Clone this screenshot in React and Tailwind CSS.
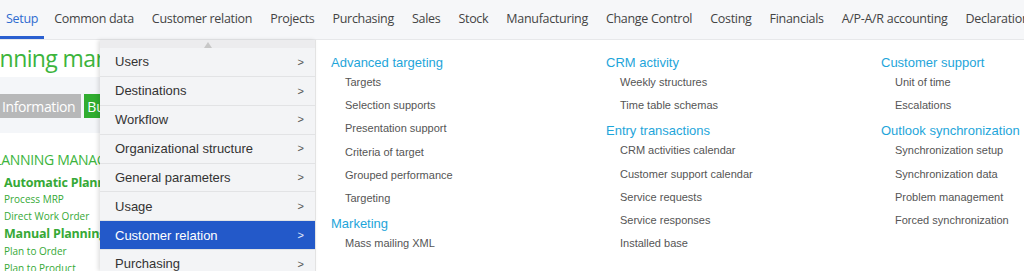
import React from "react";

const navItems = [
  "Setup",
  "Common data",
  "Customer relation",
  "Projects",
  "Purchasing",
  "Sales",
  "Stock",
  "Manufacturing",
  "Change Control",
  "Costing",
  "Financials",
  "A/P-A/R accounting",
  "Declarations",
];

const menuItems = [
  "Users",
  "Destinations",
  "Workflow",
  "Organizational structure",
  "General parameters",
  "Usage",
  "Customer relation",
  "Purchasing",
];

// columns of the sub menu, each holding groups
const columns = [
  [
    {
      title: "Advanced targeting",
      items: [
        "Targets",
        "Selection supports",
        "Presentation support",
        "Criteria of target",
        "Grouped performance",
        "Targeting",
      ],
    },
    { title: "Marketing", items: ["Mass mailing XML"] },
  ],
  [
    { title: "CRM activity", items: ["Weekly structures", "Time table schemas"] },
    {
      title: "Entry transactions",
      items: [
        "CRM activities calendar",
        "Customer support calendar",
        "Service requests",
        "Service responses",
        "Installed base",
      ],
    },
  ],
  [
    { title: "Customer support", items: ["Unit of time", "Escalations"] },
    {
      title: "Outlook synchronization",
      items: [
        "Synchronization setup",
        "Synchronization data",
        "Problem management",
        "Forced synchronization",
      ],
    },
  ],
];

const uiFont = "font-['Open_Sans','Noto_Sans',sans-serif]";
const arial = "font-['Liberation_Sans',Arial,sans-serif]";

const App = () => {
  return (
    <div className="w-[1024px] h-[271px] overflow-hidden bg-white">
      {/* top navigation */}
      <nav
        className={`flex h-[40px] bg-[#f6f7f9] border-b border-[#e7e8ea] whitespace-nowrap overflow-hidden ${uiFont} text-[12.5px] tracking-[-0.3px]`}
      >
        {navItems.map((item, i) => (
          <div
            key={item}
            className={
              i === 0
                ? "px-[6px] mr-[1px] flex items-center text-[#2f6bd0] border-b-[3px] border-[#2a5fd0] pt-[3px]"
                : "px-[9px] flex items-center text-[#444]"
            }
          >
            {item}
          </div>
        ))}
      </nav>

      <div className="flex h-[231px]">
        {/* page behind the menu */}
        <div className={`w-[100px] shrink-0 overflow-hidden whitespace-nowrap ${uiFont}`}>
          <div className="h-[37px] flex items-center overflow-hidden">
            <h1 className="ml-[-31px] text-[23px] text-[#3cb43c] tracking-[-0.6px]">
              Planning management
            </h1>
          </div>
          <div className="h-[56px] bg-[#f4f6f9] flex items-center gap-[3px] pt-[2px] overflow-hidden">
            <span className="ml-[-4px] h-[24px] px-[6px] flex items-center bg-[#b7b8b9] text-white text-[14px] tracking-[-0.4px]">
              Information
            </span>
            <span className="h-[24px] px-[3px] flex items-center bg-[#30ad30] text-white text-[14px]">
              Business
            </span>
          </div>
          <div className="ml-[-14px] mt-[16px] text-[14px] text-[#3cb43c] tracking-[-0.3px] overflow-hidden">
            PLANNING MANAGEMENT
          </div>
          <div className="pl-[4px] mt-[4px] text-[#36a936] overflow-hidden">
            <div className="text-[12.5px] font-bold leading-[17px] tracking-[-0.2px]">
              Automatic Planning
            </div>
            <div className="text-[10px] leading-[17px]">Process MRP</div>
            <div className="text-[10px] leading-[17px]">Direct Work Order</div>
            <div className="text-[12.5px] font-bold leading-[18px] tracking-[-0.2px]">
              Manual Planning
            </div>
            <div className="text-[10px] leading-[17px]">Plan to Order</div>
            <div className="text-[10px] leading-[17px]">Plan to Product</div>
          </div>
        </div>

        {/* dropdown menu */}
        <div
          className={`w-[216px] shrink-0 bg-[#f3f4f6] border-r border-[#e3e3e3] shadow-[-2px_0_4px_rgba(0,0,0,0.12)] ${arial} text-[13px] text-[#333]`}
        >
          <div className="h-[8px] bg-[#ececee] flex justify-center">
            <span className="mt-[2px] w-0 h-0 border-l-[4px] border-r-[4px] border-b-[6px] border-l-transparent border-r-transparent border-b-[#c7c7c7]" />
          </div>
          {menuItems.map((item) => {
            const active = item === "Customer relation";
            return (
              <div
                key={item}
                className={`h-[28.9px] flex items-center justify-between pl-[15px] pr-[11px] border-b border-[#e2e3e5] ${
                  active ? "bg-[#2359c9] text-white" : ""
                }`}
              >
                <span>{item}</span>
                <span
                  className={`text-[11px] ${active ? "text-[#e6ecfa]" : "text-[#555]"}`}
                >
                  &gt;
                </span>
              </div>
            );
          })}
        </div>

        {/* sub menu content */}
        <div className={`flex-1 flex pl-[15px] pt-[12px] whitespace-nowrap ${arial}`}>
          {columns.map((col, ci) => (
            <div key={ci} className="w-[275px] shrink-0">
              {col.map((group, gi) => (
                <div key={group.title} className={gi > 0 ? "mt-[3px]" : ""}>
                  <div className="h-[19px] leading-[21px] text-[13px] text-[#1ea5da]">
                    {group.title}
                  </div>
                  {group.items.map((it) => (
                    <div
                      key={it}
                      className="h-[23.2px] leading-[23.2px] pl-[14px] text-[11px] text-[#555]"
                    >
                      {it}
                    </div>
                  ))}
                </div>
              ))}
            </div>
          ))}
        </div>
      </div>
    </div>
  );
};

export default App;
